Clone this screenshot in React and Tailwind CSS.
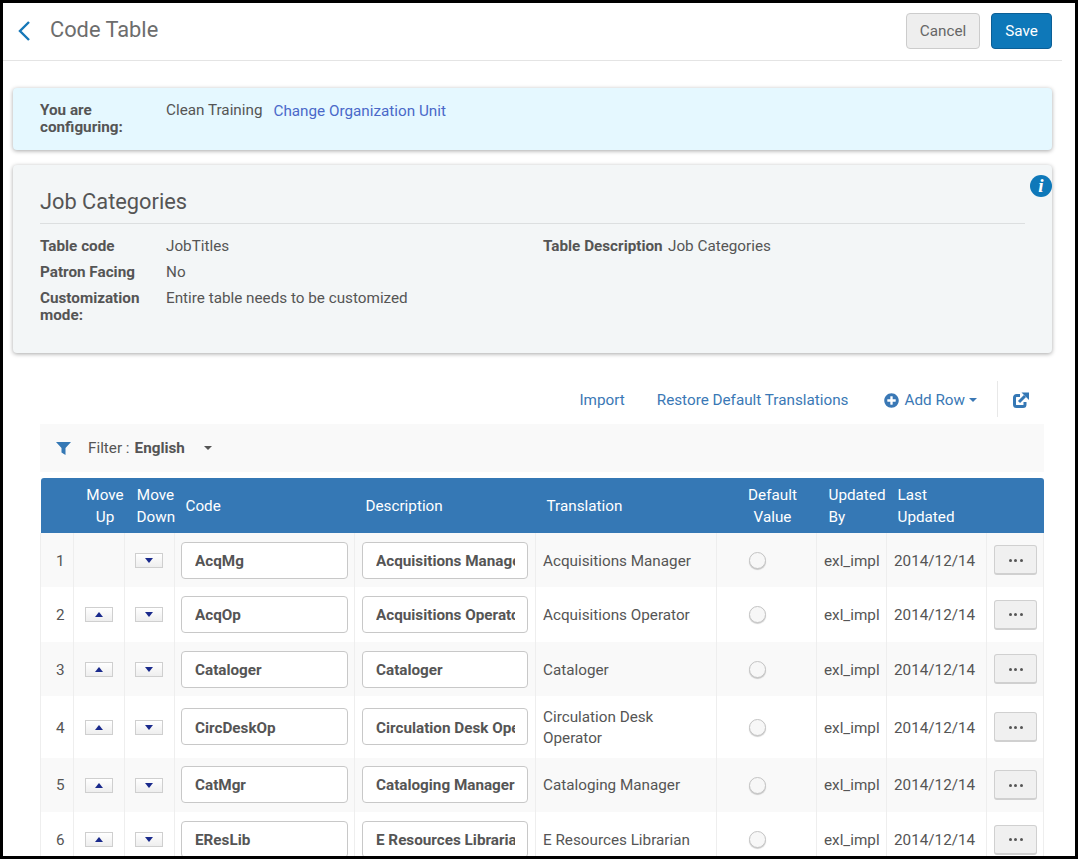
import React from 'react'
import { FaPlusCircle } from 'react-icons/fa'

const rows = [
  { n: 1, code: 'AcqMg', desc: 'Acquisitions Manager', tr: 'Acquisitions Manager', up: false, h: 'h-[54px]', pt: 'pt-[2px]' },
  { n: 2, code: 'AcqOp', desc: 'Acquisitions Operator', tr: 'Acquisitions Operator', up: true, h: 'h-[55px]', pt: 'pt-0' },
  { n: 3, code: 'Cataloger', desc: 'Cataloger', tr: 'Cataloger', up: true, h: 'h-[54px]', pt: 'pt-[2px]' },
  { n: 4, code: 'CircDeskOp', desc: 'Circulation Desk Operator', tr: 'Circulation Desk Operator', up: true, h: 'h-[62px]', pt: 'pt-[4px]' },
  { n: 5, code: 'CatMgr', desc: 'Cataloging Manager', tr: 'Cataloging Manager', up: true, h: 'h-[54px]', pt: 'pt-[2px]' },
  { n: 6, code: 'EResLib', desc: 'E Resources Librarian', tr: 'E Resources Librarian', up: true, h: 'h-[55px]', pt: 'pt-0' },
]

function Arrow({ up }) {
  return (
    <span className="flex h-[15px] w-[28px] items-center justify-center border border-[#cfcfcf] bg-gradient-to-b from-[#ffffff] to-[#eeeeee]">
      <svg width="8" height="5" viewBox="0 0 8 5">
        <path d={up ? 'M4 0 L8 5 L0 5 Z' : 'M0 0 L8 0 L4 5 Z'} fill="#1a2a8c" />
      </svg>
    </span>
  )
}

function Field({ value, pt }) {
  return (
    <input
      readOnly
      value={value}
      className={`block h-[37px] w-full rounded-[4px] border border-[#c8c8c8] bg-white pl-[13px] pr-[12px] font-bold text-[#555] outline-none ${pt}`}
    />
  )
}

export default function App() {
  return (
    <div className="h-[859px] overflow-hidden border-[3px] border-black bg-white font-['Roboto',sans-serif] text-[15.25px] text-[#555]">
      <div className="w-[1059px]">
        {/* Header */}
        <div className="flex h-[58px] items-center border-b border-[#e4e4e4] pb-[2px] pl-[15px] pr-[10px]">
          <svg width="12" height="20" viewBox="0 0 12 20" fill="none" stroke="#1677b8" strokeWidth="2.4">
            <path d="M11 1 L2 10 L11 19" />
          </svg>
          <h1 className="ml-[20px] text-[21.8px] text-[#6d6d6d]">Code Table</h1>
          <div className="ml-auto flex gap-[11px]">
            <button className="h-[36px] w-[74px] rounded-[4px] border border-[#ccc] bg-[#eeeeee] pt-[1px] text-[#666]">Cancel</button>
            <button className="h-[36px] w-[61px] rounded-[4px] border border-[#0b5f96] bg-[#0e78b9] pt-[1px] text-white">Save</button>
          </div>
        </div>

        {/* Org unit */}
        <div className="mx-[10px] mt-[27px] flex h-[62px] rounded-[4px] bg-[#e5f8ff] pl-[27px] pt-[14px] shadow-[0_1px_4px_rgba(0,0,0,0.35)]">
          <div className="w-[126px] font-bold leading-[17px]">You are<br />configuring:</div>
          <div className="leading-[17px]">Clean Training</div>
          <a className="ml-[11px] leading-[19px] text-[#4a69c9]">Change Organization Unit</a>
        </div>

        {/* Table info */}
        <div className="relative mx-[10px] mt-[15px] h-[188px] rounded-[4px] bg-[#f3f6f7] px-[27px] pt-[22px] shadow-[0_1px_4px_rgba(0,0,0,0.35)]">
          <span className="absolute right-0 top-[10px] flex h-[22px] w-[22px] items-center justify-center rounded-full bg-[#0e78b9] font-['Liberation_Serif',serif] text-[19px] font-bold italic text-white">i</span>
          <h2 className="border-b border-[#dcdfe0] pb-[7px] text-[21.8px] leading-[29px] text-[#555]">Job Categories</h2>
          <div className="mt-[14px] grid grid-cols-[126px_377px_125px_1fr] leading-[17px]">
            <div className="font-bold">Table code</div>
            <div>JobTitles</div>
            <div className="font-bold">Table Description</div>
            <div>Job Categories</div>
            <div className="col-span-4 mt-[9px] grid grid-cols-[126px_1fr]">
              <div className="font-bold">Patron Facing</div>
              <div>No</div>
            </div>
            <div className="col-span-4 mt-[9px] grid grid-cols-[126px_1fr]">
              <div className="font-bold">Customization mode:</div>
              <div>Entire table needs to be customized</div>
            </div>
          </div>
        </div>

        {/* Toolbar */}
        <div className="mt-[28px] flex h-[36px] items-center justify-end pr-[33px] pt-[2px] text-[#3a78b5]">
          <a>Import</a>
          <a className="ml-[32px]">Restore Default Translations</a>
          <FaPlusCircle className="ml-[35px]" size={15} />
          <a className="ml-[6px]">Add Row</a>
          <span className="ml-[4px] h-0 w-0 border-x-[4px] border-t-[4px] border-x-transparent border-t-[#3a78b5]" />
          <span className="mb-[2px] ml-[20px] mr-[15px] h-[36px] w-px bg-[#e8e8e8]" />
          <svg width="16" height="16" viewBox="0 0 16 16" fill="none" stroke="#3578b5" strokeWidth="3">
            <path d="M7 3.5 H3.5 a2 2 0 0 0 -2 2 V12.5 a2 2 0 0 0 2 2 H10 a2 2 0 0 0 2 -2 V10" />
            <path d="M6 10 L12 4" />
            <path d="M8.5 0.5 H16 V8 Z" fill="#3578b5" stroke="none" />
          </svg>
        </div>

        {/* Filter */}
        <div className="ml-[37px] mr-[18px] mt-[7px] flex h-[48px] items-center bg-[#f9f9f9] pl-[16px]">
          <svg width="15" height="13" viewBox="0 0 15 13">
            <path d="M0 0 H15 L9.5 6 V13 L5.5 10.5 V6 Z" fill="#3578b5" />
          </svg>
          <span className="ml-[17px]">Filter :</span>
          <span className="ml-[5px] font-bold">English</span>
          <span className="ml-[19px] h-0 w-0 border-x-[4px] border-t-[4px] border-x-transparent border-t-[#555]" />
        </div>

        {/* Rows */}
        <table className="ml-[37px] mt-[6px] w-[1003px] table-fixed border-collapse">
          <colgroup>
            <col className="w-[33px]" />
            <col className="w-[51px]" />
            <col className="w-[50px]" />
            <col className="w-[180px]" />
            <col className="w-[181px]" />
            <col className="w-[181px]" />
            <col className="w-[100px]" />
            <col className="w-[70px]" />
            <col className="w-[100px]" />
            <col className="w-[57px]" />
          </colgroup>
          <thead>
            <tr className="h-[55px] bg-[#3578b5] text-white [&>th]:font-normal [&>th]:leading-[22px]">
              <th className="rounded-tl-[3px]" />
              <th className="whitespace-nowrap pl-[12px] text-center">Move<br />Up</th>
              <th className="whitespace-nowrap pl-[12px] text-center">Move<br />Down</th>
              <th className="pl-[11px] text-left">Code</th>
              <th className="pl-[11px] text-left">Description</th>
              <th className="pl-[11px] text-left">Translation</th>
              <th className="pl-[12px] text-center">Default<br />Value</th>
              <th className="pl-[12px] text-left">Updated<br />By</th>
              <th className="pl-[11px] text-left">Last<br />Updated</th>
              <th className="rounded-tr-[3px]" />
            </tr>
          </thead>
          <tbody>
            {rows.map((r) => {
              // rows 4 and 5 sit a pixel higher in the source, row 5 text does not
              const textPad = r.n === 5 ? '' : 'pt-[2px]'
              const fieldPad = r.n === 4 || r.n === 5 ? 'pb-[2px]' : ''
              return (
                <tr key={r.n} className={`${r.h} ${r.n % 2 === 1 ? 'bg-[#f9f9f9]' : 'bg-white'} [&>td]:border-r [&>td]:border-[#eeeeee]`}>
                  <td className={`border-l border-[#eeeeee] pl-[15px] ${textPad}`}>{r.n}</td>
                  <td>
                    <div className="flex justify-center pr-[1px]">{r.up && <Arrow up />}</div>
                  </td>
                  <td>
                    <div className="flex justify-center pr-[2px]"><Arrow /></div>
                  </td>
                  <td className={`px-[6px] ${fieldPad}`}><Field value={r.code} pt={r.pt} /></td>
                  <td className={`px-[7px] ${fieldPad}`}><Field value={r.desc} pt={r.pt} /></td>
                  <td className={`px-[7px] leading-[21px] ${textPad}`}>{r.tr}</td>
                  <td className="pl-[32px]">
                    <span className="block h-[17px] w-[17px] rounded-full border border-[#c4c4c4] bg-[#f7f7f7] shadow-[0_1px_1px_rgba(0,0,0,0.2)]" />
                  </td>
                  <td className={`pl-[7px] ${textPad}`}>exl_impl</td>
                  <td className={`pl-[7px] ${textPad}`}>2014/12/14</td>
                  <td className="pl-[7px]">
                    <button className="flex h-[30px] w-[43px] items-center justify-center gap-[2.5px] rounded-[3px] border border-b-[2px] border-[#d0d0d0] bg-[#f0f0f0] pt-[1px]">
                      <span className="h-[3px] w-[3px] rounded-full bg-[#555]" />
                      <span className="h-[3px] w-[3px] rounded-full bg-[#555]" />
                      <span className="h-[3px] w-[3px] rounded-full bg-[#555]" />
                    </button>
                  </td>
                </tr>
              )
            })}
          </tbody>
        </table>
      </div>
    </div>
  )
}
